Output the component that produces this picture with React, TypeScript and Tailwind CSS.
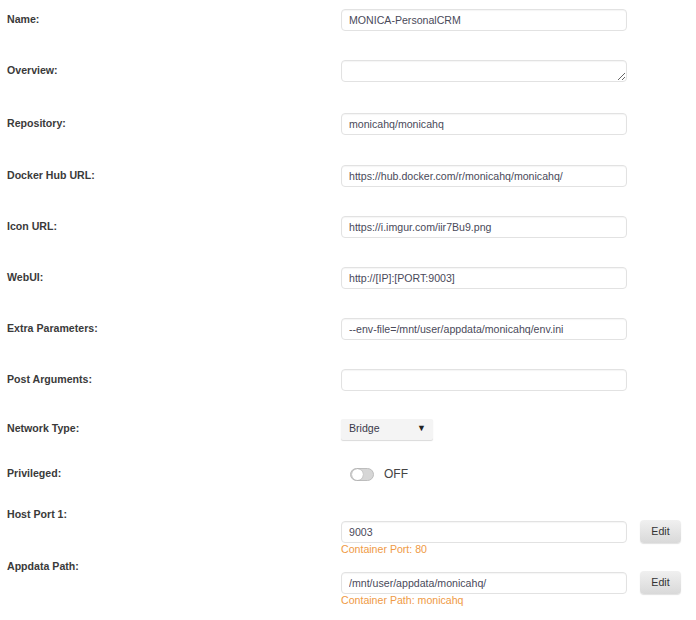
const font = { fontFamily: '"Liberation Sans", Arial, sans-serif' };

const textRows: { label: string; value: string; gap: string; area?: boolean }[] = [
  { label: "Name:", value: "MONICA-PersonalCRM", gap: "mt-[9px]" },
  { label: "Overview:", value: "", gap: "mt-[29px]", area: true },
  { label: "Repository:", value: "monicahq/monicahq", gap: "mt-[31px]" },
  { label: "Docker Hub URL:", value: "https://hub.docker.com/r/monicahq/monicahq/", gap: "mt-[30px]" },
  { label: "Icon URL:", value: "https://i.imgur.com/iir7Bu9.png", gap: "mt-[29px]" },
  { label: "WebUI:", value: "http://[IP]:[PORT:9003]", gap: "mt-[29px]" },
  { label: "Extra Parameters:", value: "--env-file=/mnt/user/appdata/monicahq/env.ini", gap: "mt-[29px]" },
  { label: "Post Arguments:", value: "", gap: "mt-[29px]" },
];

const inputCls =
  "w-[286px] h-[22px] px-[7px] border border-[#e2e2e2] rounded-[4px] bg-white text-[10.6px] text-[#4a4a5a] outline-none shadow-[inset_0_1px_1px_rgba(0,0,0,0.04)]";

function Label({ children }: { children: React.ReactNode }) {
  return (
    <div className="w-[334px] h-[22px] flex items-center shrink-0 text-[10.6px] font-bold text-[#3a3a3a]">
      {children}
    </div>
  );
}

function EditButton() {
  return (
    <button className="ml-[13px] w-[41px] h-[23px] rounded-[4px] bg-gradient-to-b from-[#f0f0f0] to-[#d9d9d9] text-[10.6px] text-[#333] shadow-[0_1px_1px_rgba(0,0,0,0.12)]">
      Edit
    </button>
  );
}

function PathRow({ label, value, note, pad }: { label: string; value: string; note: string; pad: string }) {
  return (
    <div className="flex items-start">
      <Label>{label}</Label>
      <div className={pad}>
        <div className="flex items-center">
          <input readOnly value={value} className={inputCls} style={font} />
          <EditButton />
        </div>
        <div className="h-[13px] flex items-center text-[10.6px] text-[#ef9a45]">{note}</div>
      </div>
    </div>
  );
}

export default function App() {
  return (
    <div className="w-[696px] h-[620px] bg-white pl-[7px]" style={font}>
      {textRows.map((r) => (
        <div key={r.label} className={`flex items-center ${r.gap}`}>
          <Label>{r.label}</Label>
          {r.area ? (
            <textarea readOnly value={r.value} rows={1} className={`${inputCls} resize block`} style={font} />
          ) : (
            <input readOnly value={r.value} className={inputCls} style={font} />
          )}
        </div>
      ))}

      <div className="flex items-center mt-[27px] h-[22px]">
        <Label>Network Type:</Label>
        <div className="w-[92px] h-[21px] pl-[8px] pr-[7px] flex items-center justify-between bg-[#f4f4f4] rounded-[2px] shadow-[0_1px_1px_rgba(0,0,0,0.15)] text-[10.6px] text-[#3a3a4a]">
          <span>Bridge</span>
          <span className="text-[9px] text-[#222]">▼</span>
        </div>
      </div>

      <div className="flex items-center mt-[23px] h-[22px]">
        <Label>Privileged:</Label>
        <div className="ml-[9px] flex items-center">
          <div className="w-[24px] h-[13px] rounded-full bg-[#d6d6d6] border border-[#bdbdbd] flex items-center pl-[1px]">
            <div className="w-[11px] h-[11px] rounded-full bg-white shadow-[0_0_1px_rgba(0,0,0,0.4)]" />
          </div>
          <span className="ml-[10px] text-[12px] text-[#444]">OFF</span>
        </div>
      </div>

      <div className="mt-[19px]">
        <PathRow label="Host Port 1:" value="9003" note="Container Port: 80" pad="pt-[16px]" />
      </div>
      <PathRow label="Appdata Path:" value="/mnt/user/appdata/monicahq/" note="Container Path: monicahq" pad="pt-[15px]" />
    </div>
  );
}
